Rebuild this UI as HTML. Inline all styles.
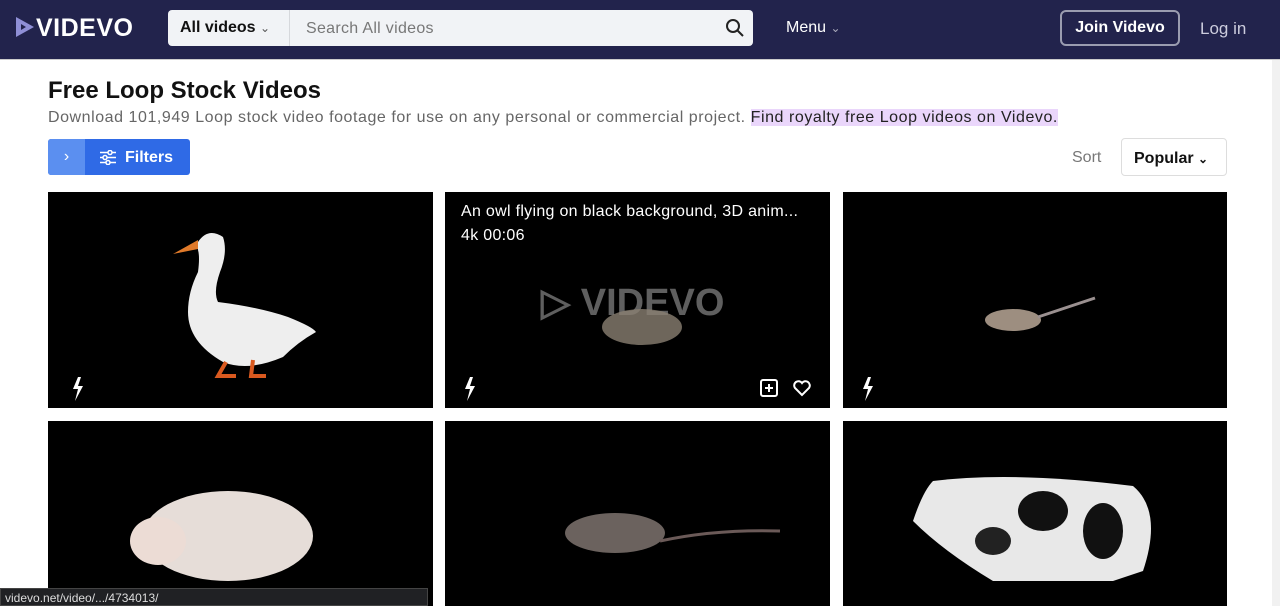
<!DOCTYPE html>
<html><head><meta charset="utf-8"><style>
*{box-sizing:border-box;margin:0;padding:0}
body{width:1280px;height:606px;overflow:hidden;background:#fff;font-family:"Liberation Sans",sans-serif;position:relative}
.hdr{position:absolute;left:0;top:0;width:1280px;height:60px;background:#22234c;border-bottom:1px solid #ccc}
.logo{position:absolute;left:14px;top:14px;color:#fff;font-weight:bold;font-size:25px;letter-spacing:0.5px}
.search{position:absolute;left:168px;top:10px;width:585px;height:36px;background:#f1f3f6;border-radius:4px}
.search .cat{position:absolute;left:0;top:0;width:122px;height:36px;border-right:1px solid #d6d8dc;font-size:16px;font-weight:bold;color:#111;padding:9px 12px}
.search .ph{position:absolute;left:138px;top:10px;font-size:16px;color:#777;letter-spacing:.3px}
.menu{position:absolute;left:786px;top:19px;color:#fff;font-size:16px}
.join{position:absolute;left:1060px;top:10px;width:120px;height:36px;border:2px solid #9a9cb0;border-radius:6px;color:#fff;font-weight:bold;font-size:16px;text-align:center;line-height:32px}
.login{position:absolute;left:1200px;top:19px;color:#ccd;font-size:17px}
h1{position:absolute;left:48px;top:77px;font-size:24px;color:#111}
.sub{position:absolute;left:48px;top:109px;font-size:16px;color:#666;letter-spacing:.55px;white-space:nowrap}
.sub span{background:#ead6fb;color:#222}
.filt{position:absolute;left:48px;top:139px;width:142px;height:36px;border-radius:3px;background:#2f6ae6;overflow:hidden}
.filt .a{position:absolute;left:0;top:0;width:37px;height:36px;background:#5b8ff0;color:#fff;text-align:center;line-height:35px;font-size:16px}
.filt .b{position:absolute;left:77px;top:10px;color:#fff;font-weight:bold;font-size:16px}
.sort{position:absolute;left:1072px;top:149px;font-size:16px;color:#777}
.pop{position:absolute;left:1121px;top:138px;width:106px;height:38px;border:1px solid #ddd;border-radius:4px;font-weight:bold;font-size:16px;padding:11px 12px;color:#111}
.card{position:absolute;background:#000;overflow:hidden}
.t{position:absolute;color:#fff;font-size:16px;letter-spacing:.3px}
.status{position:absolute;left:0;top:588px;width:428px;height:18px;background:#202124;border:1px solid #444;color:#ddd;font-size:12px;padding:2px 4px}
</style></head><body>
<div class="hdr">
<div class="logo"><svg width="22" height="24" viewBox="0 0 22 24" style="vertical-align:-3px"><path d="M2 2 L20 12 L2 22 Z M7 9 L7 15 L12 12Z" fill="#8f8fd6" fill-rule="evenodd"/></svg>VIDEVO</div>
<div class="search"><div class="cat">All videos <span style="font-weight:normal;font-size:12px;color:#555">&#8964;</span></div><div class="ph">Search All videos</div>
<svg style="position:absolute;right:8px;top:8px" width="20" height="20" viewBox="0 0 20 20"><circle cx="8" cy="8" r="6" stroke="#222" stroke-width="2" fill="none"/><path d="M12.5 12.5 L18 18" stroke="#222" stroke-width="2"/></svg></div>
<div class="menu">Menu <span style="font-size:12px;color:#aab">&#8964;</span></div>
<div class="join">Join Videvo</div>
<div class="login">Log in</div>
</div>
<h1>Free Loop Stock Videos</h1>
<div class="sub">Download 101,949 Loop stock video footage for use on any personal or commercial project. <span>Find royalty free Loop videos on Videvo.</span></div>
<div class="filt"><div class="a">&#8250;</div>
<svg style="position:absolute;left:52px;top:11px" width="16" height="15" viewBox="0 0 16 15"><g stroke="#fff" stroke-width="1.5" fill="none"><path d="M0 2.5H16M0 7.5H16M0 12.5H16"/><circle cx="10" cy="2.5" r="2" fill="#2f6ae6"/><circle cx="5" cy="7.5" r="2" fill="#2f6ae6"/><circle cx="8" cy="12.5" r="2" fill="#2f6ae6"/></g></svg>
<div class="b">Filters</div></div>
<div class="sort">Sort</div>
<div class="pop">Popular <span style="font-size:12px">&#8964;</span></div>

<div class="card" style="left:48px;top:192px;width:385px;height:216px">
<svg width="385" height="216"><path d="M150 50 Q160 35 175 45 Q180 60 172 80 Q165 100 170 110 Q210 115 240 125 Q265 135 268 140 Q250 150 235 165 Q200 180 175 170 Q140 150 140 120 Q140 100 150 80 Q152 65 150 58Z" fill="#eee"/><path d="M150 48 L125 62 L150 57Z" fill="#e07a2a"/><path d="M178 170 l-8 14 h18 M205 168 l-2 16 h15" stroke="#d9591f" stroke-width="4" fill="none"/><path d="M30 185 l-5 12 h5 l-3 12 l8 -15 h-5 l3 -9z" fill="#fff"/></svg></div>
<div class="card" style="left:445px;top:192px;width:385px;height:216px">
<div class="t" style="left:16px;top:11px">An owl flying on black background, 3D anim...</div>
<div class="t" style="left:16px;top:35px">4k 00:06</div>
<div style="position:absolute;left:96px;top:88px;color:#777;font-weight:bold;font-size:38px;opacity:.8">&#9655; VIDEVO</div>
<svg width="385" height="216" style="position:absolute;left:0;top:0"><ellipse cx="197" cy="135" rx="40" ry="18" fill="#8a7f72" opacity=".8"/><path d="M25 185 l-5 12 h5 l-3 12 l8 -15 h-5 l3 -9z" fill="#fff"/><rect x="316" y="188" width="16" height="16" rx="2" stroke="#fff" stroke-width="2" fill="none"/><path d="M324 192v8M320 196h8" stroke="#fff" stroke-width="2"/><path d="M357 203 l-7-7 a4 4 0 0 1 7-5 a4 4 0 0 1 7 5z" stroke="#fff" stroke-width="2" fill="none"/></svg></div>
<div class="card" style="left:843px;top:192px;width:384px;height:216px">
<svg width="384" height="216"><ellipse cx="170" cy="128" rx="28" ry="11" fill="#9d8e80"/><path d="M195 125 L252 106" stroke="#9a9090" stroke-width="3"/><path d="M25 185 l-5 12 h5 l-3 12 l8 -15 h-5 l3 -9z" fill="#fff"/></svg></div>
<div class="card" style="left:48px;top:421px;width:385px;height:185px">
<svg width="385" height="185"><ellipse cx="180" cy="115" rx="85" ry="45" fill="#e6ddd8"/><ellipse cx="110" cy="120" rx="28" ry="24" fill="#ecdcd5"/></svg></div>
<div class="card" style="left:445px;top:421px;width:385px;height:185px">
<svg width="385" height="185"><ellipse cx="170" cy="112" rx="50" ry="20" fill="#6b625e"/><path d="M215 120 Q270 108 335 110" stroke="#6b5a58" stroke-width="3" fill="none"/></svg></div>
<div class="card" style="left:843px;top:421px;width:384px;height:185px">
<svg width="384" height="185"><path d="M90 60 Q170 50 290 65 Q320 90 300 150 L270 160 L150 160 Q100 130 70 100 Q80 70 90 60Z" fill="#e8e8e8"/><ellipse cx="200" cy="90" rx="25" ry="20" fill="#111"/><ellipse cx="260" cy="110" rx="20" ry="28" fill="#111"/><ellipse cx="150" cy="120" rx="18" ry="14" fill="#222"/></svg></div>
<div class="status">videvo.net/video/.../4734013/</div>
<div style="position:absolute;left:1272px;top:60px;width:8px;height:546px;background:#f1f1f1"></div>
</body></html>
